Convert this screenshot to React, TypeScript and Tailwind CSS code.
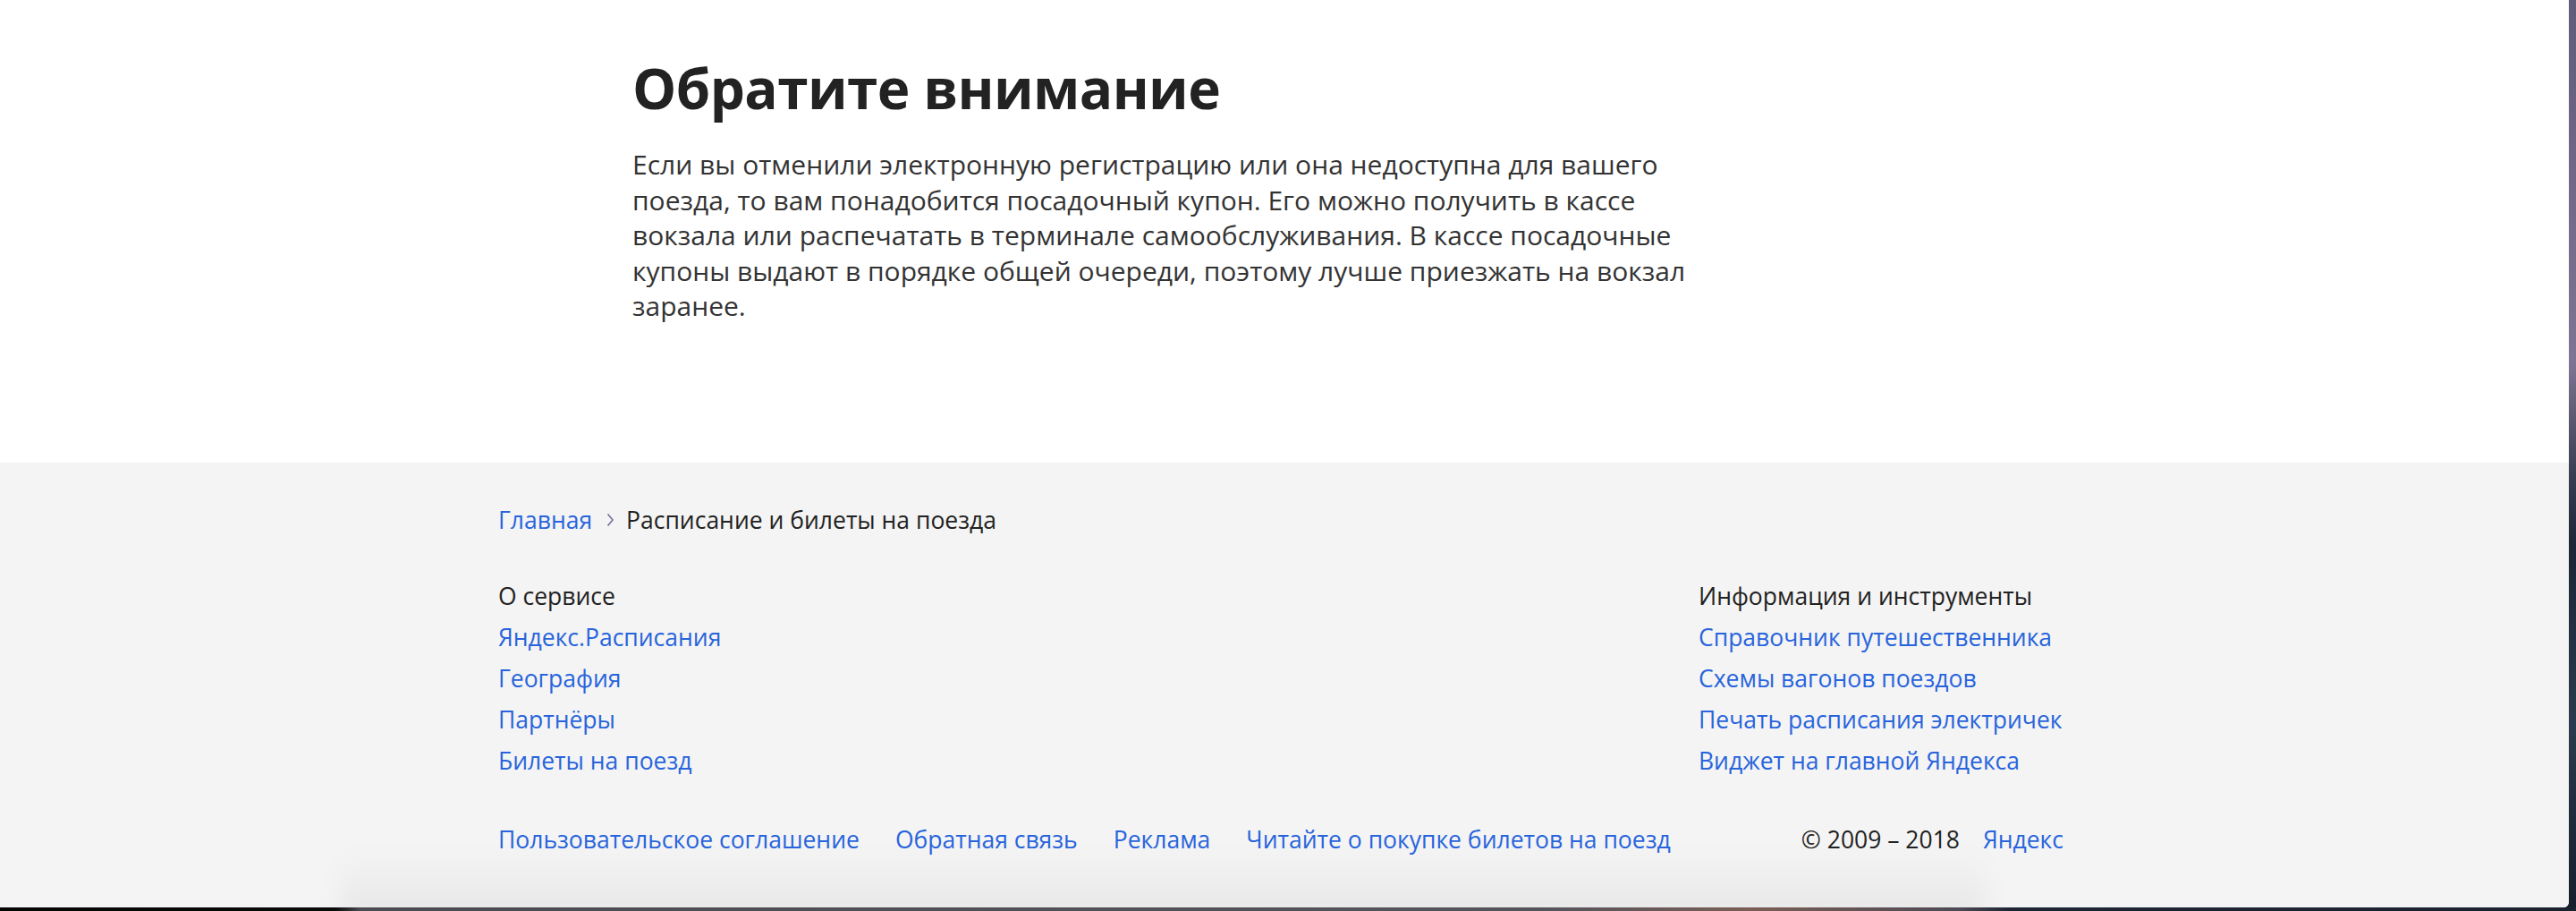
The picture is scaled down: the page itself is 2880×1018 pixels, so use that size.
const noteLines = [
  "Если вы отменили электронную регистрацию или она недоступна для вашего",
  "поезда, то вам понадобится посадочный купон. Его можно получить в кассе",
  "вокзала или распечатать в терминале самообслуживания. В кассе посадочные",
  "купоны выдают в порядке общей очереди, поэтому лучше приезжать на вокзал",
  "заранее.",
];

const aboutLinks = ["Яндекс.Расписания", "География", "Партнёры", "Билеты на поезд"];

const toolLinks = [
  "Справочник путешественника",
  "Схемы вагонов поездов",
  "Печать расписания электричек",
  "Виджет на главной Яндекса",
];

const bottomLinks = [
  "Пользовательское соглашение",
  "Обратная связь",
  "Реклама",
  "Читайте о покупке билетов на поезд",
];

const FooterColumn = ({ title, links }: { title: string; links: string[] }) => (
  <div className="flex flex-col whitespace-nowrap">
    <span className="leading-[46px] text-[#222]">{title}</span>
    {links.map((link) => (
      <a key={link} href="#" className="leading-[46px] text-[#2864dc]">
        {link}
      </a>
    ))}
  </div>
);

export default function App() {
  return (
    <div className="w-[2880px] h-[1018px] flex flex-col overflow-hidden bg-[#1a2230] font-['Open_Sans',sans-serif]">
      <div className="flex h-[1014px]">
        {/* browser window */}
        <div className="relative w-[2872px] shrink-0 h-full flex flex-col overflow-hidden rounded-br-[6px] bg-white">
          <main className="h-[517px] shrink-0">
            <div className="w-[1758px] mx-auto pl-[150px] pt-[67px]">
              <h1 className="text-[62px] leading-[62px] font-bold tracking-[-0.6px] text-[#222]">Обратите внимание</h1>
              <p className="mt-[35px] text-[30px] leading-[39.5px] text-[#333]">
                {noteLines.map((line) => (
                  <span key={line} className="block whitespace-nowrap">
                    {line}
                  </span>
                ))}
              </p>
            </div>
          </main>

          <footer className="flex-1 bg-[#f4f4f4]">
            <div className="w-[1758px] mx-auto pt-[44px] text-[26.5px]">
              <div className="flex items-center leading-[40px] whitespace-nowrap">
                <a href="#" className="text-[#2864dc]">Главная</a>
                <svg className="ml-[15px] mr-[13px] w-[10px] h-[18px]" viewBox="0 0 10 18" fill="none">
                  <path d="M2.5 2.5 L8 9 L2.5 15.5" stroke="#6f70a0" strokeWidth="1.6" />
                </svg>
                <span className="text-[#222]">Расписание и билеты на поезда</span>
              </div>

              <div className="flex mt-[42px]">
                <div className="w-[1342px] shrink-0">
                  <FooterColumn title="О сервисе" links={aboutLinks} />
                </div>
                <FooterColumn title="Информация и инструменты" links={toolLinks} />
              </div>

              <div className="flex items-center justify-between mt-[42px] pr-[8px] leading-[46px] whitespace-nowrap">
                <div className="flex gap-[40px]">
                  {bottomLinks.map((link) => (
                    <a key={link} href="#" className="text-[#2864dc]">
                      {link}
                    </a>
                  ))}
                </div>
                <div className="flex gap-[26px]">
                  <span className="text-[#222]">© 2009 – 2018</span>
                  <a href="#" className="text-[#2864dc]">Яндекс</a>
                </div>
              </div>
            </div>
          </footer>

          {/* dock shadow over the window */}
          <div className="absolute bottom-[-20px] left-[380px] w-[1840px] h-[84px] bg-gradient-to-b from-transparent to-black/[0.06] blur-[14px] pointer-events-none" />
        </div>
        {/* desktop strip on the right */}
        <div className="flex-1 bg-[linear-gradient(to_bottom,#625c78_0%,#7f7592_40%,#3a3f55_52%,#1c2636_60%,#2b3a4e_80%,#161e2b_100%)]" />
      </div>
      {/* desktop strip under the window */}
      <div className="flex-1 bg-[linear-gradient(to_right,#050505_0%,#0a0a0a_13%,#4b4b52_14%,#55545c_60%,#7a5e55_68%,#4d4a55_76%,#1d2634_78%,#1a2230_100%)]" />
    </div>
  );
}
